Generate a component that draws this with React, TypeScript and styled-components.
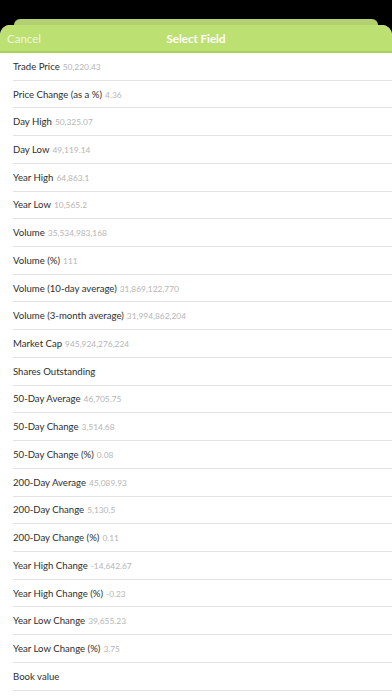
import React from "react";
import styled, { createGlobalStyle } from "styled-components";

const Global = createGlobalStyle`
  html, body { margin: 0; padding: 0; background: #000; }
  body { font-family: "Lato", "Open Sans", sans-serif; -webkit-font-smoothing: antialiased; }
  * { box-sizing: border-box; }
`;

const Page = styled.div`
  width: 392px;
  height: 696px;
  background: #000;
  padding-top: 19px;
  display: flex;
  flex-direction: column;
  overflow: hidden;
`;

const BackSheet = styled.div`
  margin: 0 14px;
  height: 6px;
  background: #b3d173;
  border-radius: 6px 6px 0 0;
  flex-shrink: 0;
`;

const Sheet = styled.div`
  flex: 1;
  background: #fff;
  border-radius: 10px 10px 0 0;
  overflow: hidden;
  display: flex;
  flex-direction: column;
`;

const Header = styled.div`
  height: 28px;
  background: #bde073;
  border-bottom: 2px solid #a9d05a;
  display: grid;
  grid-template-columns: 1fr auto 1fr;
  align-items: center;
  padding: 0 7px;
  flex-shrink: 0;
`;

const Cancel = styled.span`
  color: rgba(255, 255, 255, 0.75);
  font-size: 11.5px;
  justify-self: start;
`;

const Title = styled.span`
  color: #fff;
  font-size: 11.5px;
  font-weight: 700;
`;

const List = styled.div`
  display: flex;
  flex-direction: column;
`;

const Row = styled.div`
  height: 27.73px;
  margin-left: 13px;
  border-bottom: 1px solid #e2e2e2;
  display: flex;
  align-items: center;
  font-size: 9.6px;
  color: #2e2e2e;
  white-space: nowrap;
  flex-shrink: 0;
`;

const Value = styled.span`
  color: #b5b5b5;
  margin-left: 3px;
  font-size: 8.4px;
  padding-top: 1px;
`;

const rows: [string, string?][] = [
  ["Trade Price", "50,220.43"],
  ["Price Change (as a %)", "4.36"],
  ["Day High", "50,325.07"],
  ["Day Low", "49,119.14"],
  ["Year High", "64,863.1"],
  ["Year Low", "10,565.2"],
  ["Volume", "35,534,983,168"],
  ["Volume (%)", "111"],
  ["Volume (10-day average)", "31,869,122,770"],
  ["Volume (3-month average)", "31,994,862,204"],
  ["Market Cap", "945,924,276,224"],
  ["Shares Outstanding"],
  ["50-Day Average", "46,705.75"],
  ["50-Day Change", "3,514.68"],
  ["50-Day Change (%)", "0.08"],
  ["200-Day Average", "45,089.93"],
  ["200-Day Change", "5,130.5"],
  ["200-Day Change (%)", "0.11"],
  ["Year High Change", "-14,642.67"],
  ["Year High Change (%)", "-0.23"],
  ["Year Low Change", "39,655.23"],
  ["Year Low Change (%)", "3.75"],
  ["Book value"],
  [""],
];

export default function App() {
  return (
    <>
      <Global />
      <Page>
        <BackSheet />
        <Sheet>
          <Header>
            <Cancel>Cancel</Cancel>
            <Title>Select Field</Title>
            <span />
          </Header>
          <List>
            {rows.map(([label, value], i) => (
              <Row key={i}>
                {label}
                {value && <Value>{value}</Value>}
              </Row>
            ))}
          </List>
        </Sheet>
      </Page>
    </>
  );
}
